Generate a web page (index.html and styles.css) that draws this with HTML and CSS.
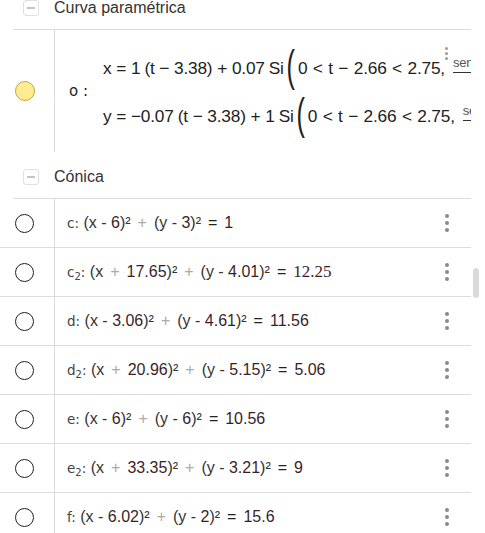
FILE: index.html
```html
<!DOCTYPE html>
<html lang="es">
<head>
<meta charset="utf-8">
<link rel="stylesheet" href="styles.css">
</head>
<body>
<div class="panel">
  <div class="list">
    <div class="group-head">
      <span class="toggle"><span class="minus"></span></span>
      <span class="group-title">Curva paramétrica</span>
    </div>
    <div class="param-row">
      <div class="marker"><span class="dot-yellow"></span></div>
      <div class="param-body">
        <span class="plabel">o :</span>
        <div class="eqs">
          <div class="eq"><span>x</span><span class="op">=</span><span>1</span><span class="sp">(t</span><span class="op">−</span><span>3.38)</span><span class="op">+</span><span>0.07</span><span class="sp">Si</span><span class="bigp">(</span><span>0</span><span class="op2">&lt;</span><span>t</span><span class="op2">−</span><span>2.66</span><span class="op2">&lt;</span><span>2.75,</span><span class="frac"><span class="num">sen</span><span class="bar"></span></span></div>
          <div class="eq"><span>y</span><span class="op">=</span><span>−0.07</span><span class="sp">(t</span><span class="op">−</span><span>3.38)</span><span class="op">+</span><span>1</span><span class="sp">Si</span><span class="bigp">(</span><span>0</span><span class="op2">&lt;</span><span>t</span><span class="op2">−</span><span>2.66</span><span class="op2">&lt;</span><span>2.75,</span><span class="frac"><span class="num">sen</span><span class="bar"></span></span></div>
        </div>
        <span class="menu small"><i></i><i></i><i></i></span>
      </div>
    </div>
    <div class="group-head">
      <span class="toggle"><span class="minus"></span></span>
      <span class="group-title">Cónica</span>
    </div>

    <div class="row">
      <div class="marker"><span class="ring"></span></div>
      <div class="formula"><span class="lbl">c:</span> (x - <span class="n">6</span>)²<span class="pl">+</span>(y - <span class="n">3</span>)²<span class="eqop">=</span><span class="n">1</span></div>
      <span class="menu"><i></i><i></i><i></i></span>
    </div>
    <div class="row">
      <div class="marker"><span class="ring"></span></div>
      <div class="formula"><span class="lbl">c<sub>2</sub>:</span> (x<span class="pl">+</span><span class="n">17.65</span>)²<span class="pl">+</span>(y - <span class="n">4.01</span>)²<span class="eqop">=</span><span class="n serif">12.25</span></div>
      <span class="menu"><i></i><i></i><i></i></span>
    </div>
    <div class="row">
      <div class="marker"><span class="ring"></span></div>
      <div class="formula"><span class="lbl">d:</span> (x - <span class="n">3.06</span>)²<span class="pl">+</span>(y - <span class="n">4.61</span>)²<span class="eqop">=</span><span class="n">11.56</span></div>
      <span class="menu"><i></i><i></i><i></i></span>
    </div>
    <div class="row">
      <div class="marker"><span class="ring"></span></div>
      <div class="formula"><span class="lbl">d<sub>2</sub>:</span> (x<span class="pl">+</span><span class="n">20.96</span>)²<span class="pl">+</span>(y - <span class="n">5.15</span>)²<span class="eqop">=</span><span class="n">5.06</span></div>
      <span class="menu"><i></i><i></i><i></i></span>
    </div>
    <div class="row">
      <div class="marker"><span class="ring"></span></div>
      <div class="formula"><span class="lbl">e:</span> (x - <span class="n">6</span>)²<span class="pl">+</span>(y - <span class="n">6</span>)²<span class="eqop">=</span><span class="n">10.56</span></div>
      <span class="menu"><i></i><i></i><i></i></span>
    </div>
    <div class="row">
      <div class="marker"><span class="ring"></span></div>
      <div class="formula"><span class="lbl">e<sub>2</sub>:</span> (x<span class="pl">+</span><span class="n">33.35</span>)²<span class="pl">+</span>(y - <span class="n">3.21</span>)²<span class="eqop">=</span><span class="n">9</span></div>
      <span class="menu"><i></i><i></i><i></i></span>
    </div>
    <div class="row">
      <div class="marker"><span class="ring"></span></div>
      <div class="formula"><span class="lbl">f:</span> (x - <span class="n">6.02</span>)²<span class="pl">+</span>(y - <span class="n">2</span>)²<span class="eqop">=</span><span class="n">15.6</span></div>
      <span class="menu"><i></i><i></i><i></i></span>
    </div>
  </div>
  <div class="scroll-thumb"></div>
</div>
</body>
</html>
```

FILE: styles.css
```css
html, body {
  margin: 0;
  padding: 0;
  background: #ffffff;
}
body {
  width: 485px;
  height: 533px;
  overflow: hidden;
  font-family: "Liberation Sans", Arial, sans-serif;
  color: #333333;
}
.panel {
  position: relative;
  width: 485px;
  height: 533px;
  overflow: hidden;
}
.list {
  width: 471px;
  margin-top: -17px;
  overflow: hidden;
}
.group-head {
  height: 46px;
  margin-left: 13px;
  border-bottom: 1px solid #dcdcdc;
  display: flex;
  align-items: center;
}
.toggle {
  width: 14px;
  height: 14px;
  margin-left: 10px;
  border: 1px solid #e0e0e0;
  border-radius: 3px;
  display: flex;
  align-items: center;
  justify-content: center;
  margin-top: 3px;
}
.minus {
  width: 8px;
  height: 2px;
  background: #c4c4c4;
}
.group-title {
  margin-left: 15px;
  font-size: 16px;
  color: #333;
  margin-top: 4px;
}
.marker {
  width: 55px;
  box-sizing: border-box;
  border-right: 1px solid #dcdcdc;
  flex: none;
  display: flex;
  align-items: center;
  align-self: stretch;
}
.param-row {
  height: 122px;
  display: flex;
  position: relative;
}
.dot-yellow {
  width: 18px;
  height: 18px;
  border-radius: 50%;
  background: #ffeb94;
  border: 1px solid #c9a53b;
  margin-left: 15px;
}
.param-body {
  display: flex;
  align-items: center;
  flex: 1;
  min-width: 0;
  overflow: hidden;
}
.plabel {
  margin-left: 14px;
  font-size: 15px;
  font-family: "DejaVu Sans", sans-serif;
  color: #222;
  flex: none;
  width: 34px;
}
.eqs {
  display: flex;
  flex-direction: column;
  gap: 8px;
  white-space: nowrap;
  margin-top: 3px;
}
.eq {
  display: flex;
  align-items: center;
  height: 40px;
  font-size: 17.3px;
  font-family: "Liberation Sans", sans-serif;
  color: #222;
  letter-spacing: -0.2px;
}
.eq .op {
  margin: 0 4.8px;
}
.eq .op2 {
  margin: 0 5.5px;
}
.eq .sp {
  margin-left: 4px;
}
.bigp {
  display: inline-block;
  font-size: 22px;
  transform: scale(1.15, 2);
  margin: 0 4px 4px 3px;
}
.frac {
  display: inline-flex;
  flex-direction: column;
  align-items: flex-start;
  margin-left: 8px;
  margin-top: -10px;
}
.num {
  font-size: 13px;
  color: #555;
}
.bar {
  width: 30px;
  height: 1px;
  background: #333;
  margin-top: 2px;
}
.menu {
  display: flex;
  flex-direction: column;
  gap: 3px;
  width: 4px;
  margin-right: 22px;
  flex: none;
}
.menu i {
  display: block;
  width: 4px;
  height: 4px;
  border-radius: 50%;
  background: #8a8a8a;
}
.menu.small {
  position: absolute;
  left: 445px;
  top: 17px;
  gap: 2px;
}
.menu.small i {
  width: 3px;
  height: 3px;
  background: #9a9a9a;
}
.row {
  height: 48px;
  display: flex;
  align-items: center;
  border-bottom: 1px solid #dcdcdc;
}
.ring {
  width: 17px;
  height: 17px;
  border: 1.5px solid #222;
  border-radius: 50%;
  margin-left: 15px;
  margin-top: 1px;
}
.formula {
  flex: 1;
  padding-left: 12px;
  font-size: 16px;
  color: #333;
  white-space: nowrap;
  font-family: "Liberation Sans", sans-serif;
}
.formula .lbl {
  font-family: "DejaVu Sans", sans-serif;
  font-size: 13.5px;
  color: #444;
}
.formula sub {
  font-size: 10px;
  vertical-align: -3px;
}
.formula .pl {
  color: #b0a8a8;
  margin: 0 7px;
}
.formula .eqop {
  margin: 0 7px;
  color: #222;
}
.formula .n {
  color: #3a1f2a;
}
.formula .serif {
  font-family: "Liberation Serif", serif;
  font-size: 17px;
}
.scroll-thumb {
  position: absolute;
  left: 473px;
  top: 268px;
  width: 6px;
  height: 30px;
  border-radius: 3px;
  background: #dadada;
}
```
